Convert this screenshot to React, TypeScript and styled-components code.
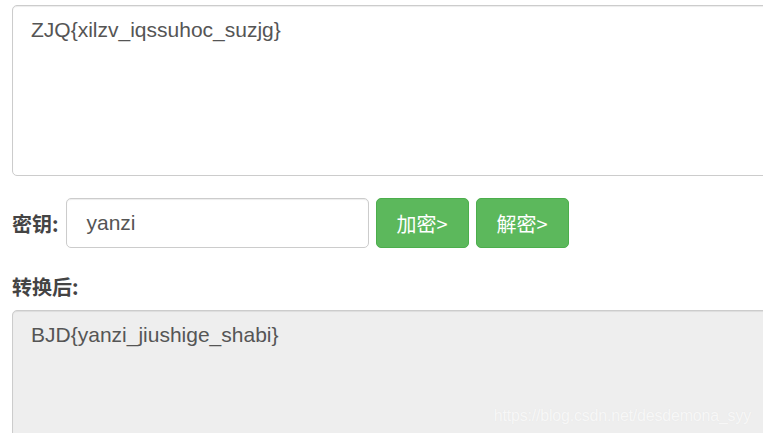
import { type JSX } from 'react';
import styled, { createGlobalStyle } from 'styled-components';

const GlobalStyle = createGlobalStyle`
  html,
  body {
    margin: 0;
    padding: 0;
    background: #fff;
    overflow: hidden;
  }
  body {
    font-family: 'Liberation Sans', Arial, 'Noto Sans CJK SC', sans-serif;
    color: #333;
  }
`;

const Page = styled.div`
  display: flex;
  flex-direction: column;
  padding: 5px 0 0 12px;
  width: 820px;
  height: 433px;
  box-sizing: border-box;
  overflow: hidden;
`;

const TextBox = styled.div<{ $readOnly?: boolean }>`
  position: relative;
  box-sizing: border-box;
  width: 100%;
  height: ${({ $readOnly }) => ($readOnly ? '140px' : '171px')};
  padding: 9px 18px;
  border: 1px solid #ccc;
  border-radius: 5px;
  background: ${({ $readOnly }) => ($readOnly ? '#eee' : '#fff')};
  box-shadow: inset 0 1px 1px rgba(0, 0, 0, 0.075);
  font-size: 21px;
  line-height: 30px;
  color: #555;
  flex-shrink: 0;
`;

const KeyRow = styled.div`
  display: flex;
  align-items: center;
  margin-top: 22px;
  height: 50px;
`;

const Label = styled.span`
  font-family: 'Noto Sans CJK SC', 'Liberation Sans', sans-serif;
  font-weight: 700;
  font-size: 20px;
  color: #444;
  margin-right: 7px;
`;

const KeyInput = styled.div`
  box-sizing: border-box;
  width: 303px;
  height: 50px;
  padding: 0 20px;
  display: flex;
  align-items: center;
  border: 1px solid #ccc;
  border-radius: 5px;
  box-shadow: inset 0 1px 1px rgba(0, 0, 0, 0.075);
  font-size: 21px;
  color: #555;
`;

const ActionButton = styled.button`
  box-sizing: border-box;
  width: 93px;
  height: 50px;
  margin-left: 7px;
  border: 1px solid #4cae4c;
  border-radius: 5px;
  background: #5cb85c;
  color: #fff;
  font-family: 'Noto Sans CJK SC', 'Liberation Sans', sans-serif;
  font-size: 20px;
  padding: 0;
  cursor: pointer;
`;

const SectionLabel = styled(Label)`
  display: block;
  margin: 25px 0 10px;
  line-height: 27px;
`;

const Watermark = styled.span`
  position: absolute;
  right: 68px;
  top: 95px;
  font-size: 16px;
  letter-spacing: -0.2px;
  line-height: 20px;
  color: #f7f7f7;
  text-shadow: 0 0 1px #e4e4e4;
  white-space: nowrap;
`;

const App = (): JSX.Element => (
  <>
    <GlobalStyle />
    <Page>
      <TextBox>ZJQ{'{'}xilzv_iqssuhoc_suzjg{'}'}</TextBox>
      <KeyRow>
        <Label>密钥:</Label>
        <KeyInput>yanzi</KeyInput>
        <ActionButton>加密&gt;</ActionButton>
        <ActionButton>解密&gt;</ActionButton>
      </KeyRow>
      <SectionLabel>转换后:</SectionLabel>
      <TextBox $readOnly>
        BJD{'{'}yanzi_jiushige_shabi{'}'}
        <Watermark>https://blog.csdn.net/desdemona_syy</Watermark>
      </TextBox>
    </Page>
  </>
);

export default App;
